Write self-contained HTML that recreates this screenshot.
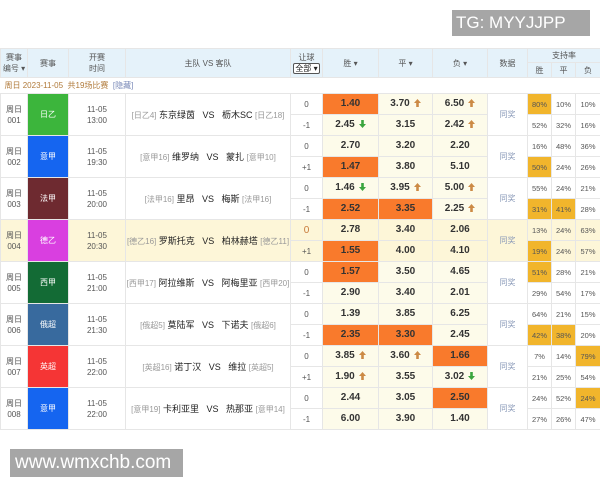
<!DOCTYPE html>
<html><head><meta charset="utf-8"><style>
*{margin:0;padding:0;box-sizing:border-box}
body{width:600px;height:480px;background:#fff;position:relative;overflow:hidden;font-family:"Liberation Sans","Noto Sans CJK SC",sans-serif;color:#333}
.wrap{position:absolute;left:0;top:48px;width:600px;height:385px;overflow:hidden}
table{border-collapse:collapse;table-layout:fixed;width:600px}
td,th{border:1px solid #e6e6e6;text-align:center;vertical-align:middle;font-size:8px;font-weight:normal;padding:0;white-space:nowrap;overflow:hidden}
th{background:#e5f2fa;color:#555;line-height:11px}
.date td{height:16px;text-align:left;padding-left:4px;color:#b07a3a;font-size:8px;border-left:none;border-right:none}
.date span{color:#7a8ab8}
.num{color:#555;line-height:11px}
.lg{color:#fff;font-size:8px}
.tm{color:#555;line-height:11px}
.tt{font-size:9px;color:#222}
.tt i{font-style:normal;color:#999;font-size:8px}
.hc{color:#555;font-size:8px}
.o{background:#fdfbea;font-weight:bold;font-size:10px;color:#333;line-height:12px}
.O{background:#f97a2c!important}
.Y{background:#f1b52c!important}
.sp{font-size:7.5px;color:#555}
.dt{color:#8a9ab8;font-size:8px}
svg.a{width:7px;height:8px;margin-left:4px;vertical-align:-1px}
tr.h td{background:#fdf6d8}
tr.h td.o{background:#fdf6d8}
.r td{height:21px}
.wm{position:absolute;background:#a6a6a6;color:#fff;font-family:"Liberation Sans",sans-serif}
</style></head><body>
<svg width="0" height="0" style="position:absolute"><defs>
<symbol id="up" viewBox="0 0 7 8"><path d="M3.5 0L7 4H4.8V8H2.2V4H0Z" fill="#cc8a45"/></symbol>
<symbol id="dn" viewBox="0 0 7 8"><path d="M3.5 8L7 4H4.8V0H2.2V4H0Z" fill="#3aa53e"/></symbol>
</defs></svg>
<div class="wm" style="left:452px;top:10px;width:138px;height:26px;font-size:17px;line-height:26px;padding-left:4px">TG: MYYJJPP</div>
<div class="wrap"><table>
<colgroup><col style="width:27px"><col style="width:41px"><col style="width:57px"><col style="width:165px"><col style="width:32px"><col style="width:56px"><col style="width:54px"><col style="width:55px"><col style="width:40px"><col style="width:24px"><col style="width:24px"><col style="width:25px"></colgroup>
<tr><th rowspan="2" style="height:29px">赛事<br>编号 ▾</th><th rowspan="2">赛事</th><th rowspan="2">开赛<br>时间</th><th rowspan="2">主队 VS 客队</th><th rowspan="2">让球<br><span style="border:1px solid #555;border-radius:2px;background:#fff;color:#222;padding:0 1px">全部 ▾</span></th><th rowspan="2">胜 ▾</th><th rowspan="2">平 ▾</th><th rowspan="2">负 ▾</th><th rowspan="2">数据</th><th colspan="3" style="height:14px">支持率</th></tr>
<tr><th style="height:15px">胜</th><th>平</th><th>负</th></tr>
<tr class="date"><td colspan="12">周日 2023-11-05 &nbsp;共19场比赛 &nbsp;<span>[隐藏]</span></td></tr>

<tr class="r"><td rowspan="2" class="num">周日<br>001</td><td rowspan="2" class="lg" style="background:#3cb53c">日乙</td><td rowspan="2" class="tm">11-05<br>13:00</td><td rowspan="2" class="tt"><i>[日乙4]</i> 东京绿茵 &nbsp; VS &nbsp; 枥木SC <i>[日乙18]</i></td><td class="hc">0</td><td class="o O">1.40</td><td class="o">3.70<svg class="a"><use href="#up"/></svg></td><td class="o">6.50<svg class="a"><use href="#up"/></svg></td><td rowspan="2" class="dt">同奖</td><td class="sp Y">80%</td><td class="sp">10%</td><td class="sp">10%</td></tr>
<tr class="r"><td class="hc">-1</td><td class="o">2.45<svg class="a"><use href="#dn"/></svg></td><td class="o">3.15</td><td class="o">2.42<svg class="a"><use href="#up"/></svg></td><td class="sp">52%</td><td class="sp">32%</td><td class="sp">16%</td></tr>

<tr class="r"><td rowspan="2" class="num">周日<br>002</td><td rowspan="2" class="lg" style="background:#1565f0">意甲</td><td rowspan="2" class="tm">11-05<br>19:30</td><td rowspan="2" class="tt"><i>[意甲16]</i> 维罗纳 &nbsp; VS &nbsp; 蒙扎 <i>[意甲10]</i></td><td class="hc">0</td><td class="o">2.70</td><td class="o">3.20</td><td class="o">2.20</td><td rowspan="2" class="dt">同奖</td><td class="sp">16%</td><td class="sp">48%</td><td class="sp">36%</td></tr>
<tr class="r"><td class="hc">+1</td><td class="o O">1.47</td><td class="o">3.80</td><td class="o">5.10</td><td class="sp Y">50%</td><td class="sp">24%</td><td class="sp">26%</td></tr>

<tr class="r"><td rowspan="2" class="num">周日<br>003</td><td rowspan="2" class="lg" style="background:#6e2a30">法甲</td><td rowspan="2" class="tm">11-05<br>20:00</td><td rowspan="2" class="tt"><i>[法甲16]</i> 里昂 &nbsp; VS &nbsp; 梅斯 <i>[法甲16]</i></td><td class="hc">0</td><td class="o">1.46<svg class="a"><use href="#dn"/></svg></td><td class="o">3.95<svg class="a"><use href="#up"/></svg></td><td class="o">5.00<svg class="a"><use href="#up"/></svg></td><td rowspan="2" class="dt">同奖</td><td class="sp">55%</td><td class="sp">24%</td><td class="sp">21%</td></tr>
<tr class="r"><td class="hc">-1</td><td class="o O">2.52</td><td class="o O">3.35</td><td class="o">2.25<svg class="a"><use href="#up"/></svg></td><td class="sp Y">31%</td><td class="sp Y">41%</td><td class="sp">28%</td></tr>

<tr class="r h"><td rowspan="2" class="num">周日<br>004</td><td rowspan="2" class="lg" style="background:#d93fe0!important">德乙</td><td rowspan="2" class="tm">11-05<br>20:30</td><td rowspan="2" class="tt"><i>[德乙16]</i> 罗斯托克 &nbsp; VS &nbsp; 柏林赫塔 <i>[德乙11]</i></td><td class="hc" style="color:#c87a3a;font-size:10px">0</td><td class="o">2.78</td><td class="o">3.40</td><td class="o">2.06</td><td rowspan="2" class="dt">同奖</td><td class="sp">13%</td><td class="sp">24%</td><td class="sp">63%</td></tr>
<tr class="r h"><td class="hc">+1</td><td class="o O">1.55</td><td class="o">4.00</td><td class="o">4.10</td><td class="sp Y">19%</td><td class="sp">24%</td><td class="sp">57%</td></tr>

<tr class="r"><td rowspan="2" class="num">周日<br>005</td><td rowspan="2" class="lg" style="background:#136b35">西甲</td><td rowspan="2" class="tm">11-05<br>21:00</td><td rowspan="2" class="tt"><i>[西甲17]</i> 阿拉维斯 &nbsp; VS &nbsp; 阿梅里亚 <i>[西甲20]</i></td><td class="hc">0</td><td class="o O">1.57</td><td class="o">3.50</td><td class="o">4.65</td><td rowspan="2" class="dt">同奖</td><td class="sp Y">51%</td><td class="sp">28%</td><td class="sp">21%</td></tr>
<tr class="r"><td class="hc">-1</td><td class="o">2.90</td><td class="o">3.40</td><td class="o">2.01</td><td class="sp">29%</td><td class="sp">54%</td><td class="sp">17%</td></tr>

<tr class="r"><td rowspan="2" class="num">周日<br>006</td><td rowspan="2" class="lg" style="background:#386a9e">俄超</td><td rowspan="2" class="tm">11-05<br>21:30</td><td rowspan="2" class="tt"><i>[俄超5]</i> 莫陆军 &nbsp; VS &nbsp; 下诺夫 <i>[俄超6]</i></td><td class="hc">0</td><td class="o">1.39</td><td class="o">3.85</td><td class="o">6.25</td><td rowspan="2" class="dt">同奖</td><td class="sp">64%</td><td class="sp">21%</td><td class="sp">15%</td></tr>
<tr class="r"><td class="hc">-1</td><td class="o O">2.35</td><td class="o O">3.30</td><td class="o">2.45</td><td class="sp Y">42%</td><td class="sp Y">38%</td><td class="sp">20%</td></tr>

<tr class="r"><td rowspan="2" class="num">周日<br>007</td><td rowspan="2" class="lg" style="background:#f53535">英超</td><td rowspan="2" class="tm">11-05<br>22:00</td><td rowspan="2" class="tt"><i>[英超16]</i> 诺丁汉 &nbsp; VS &nbsp; 维拉 <i>[英超5]</i></td><td class="hc">0</td><td class="o">3.85<svg class="a"><use href="#up"/></svg></td><td class="o">3.60<svg class="a"><use href="#up"/></svg></td><td class="o O">1.66</td><td rowspan="2" class="dt">同奖</td><td class="sp">7%</td><td class="sp">14%</td><td class="sp Y">79%</td></tr>
<tr class="r"><td class="hc">+1</td><td class="o">1.90<svg class="a"><use href="#up"/></svg></td><td class="o">3.55</td><td class="o">3.02<svg class="a"><use href="#dn"/></svg></td><td class="sp">21%</td><td class="sp">25%</td><td class="sp">54%</td></tr>

<tr class="r"><td rowspan="2" class="num">周日<br>008</td><td rowspan="2" class="lg" style="background:#1565f0">意甲</td><td rowspan="2" class="tm">11-05<br>22:00</td><td rowspan="2" class="tt"><i>[意甲19]</i> 卡利亚里 &nbsp; VS &nbsp; 热那亚 <i>[意甲14]</i></td><td class="hc">0</td><td class="o">2.44</td><td class="o">3.05</td><td class="o O">2.50</td><td rowspan="2" class="dt">同奖</td><td class="sp">24%</td><td class="sp">52%</td><td class="sp Y">24%</td></tr>
<tr class="r"><td class="hc">-1</td><td class="o">6.00</td><td class="o">3.90</td><td class="o">1.40</td><td class="sp">27%</td><td class="sp">26%</td><td class="sp">47%</td></tr>
</table></div>
<div class="wm" style="left:10px;top:449px;width:173px;height:28px;font-size:19px;line-height:28px;padding-left:5px">www.wmxchb.com</div>
</body></html>
